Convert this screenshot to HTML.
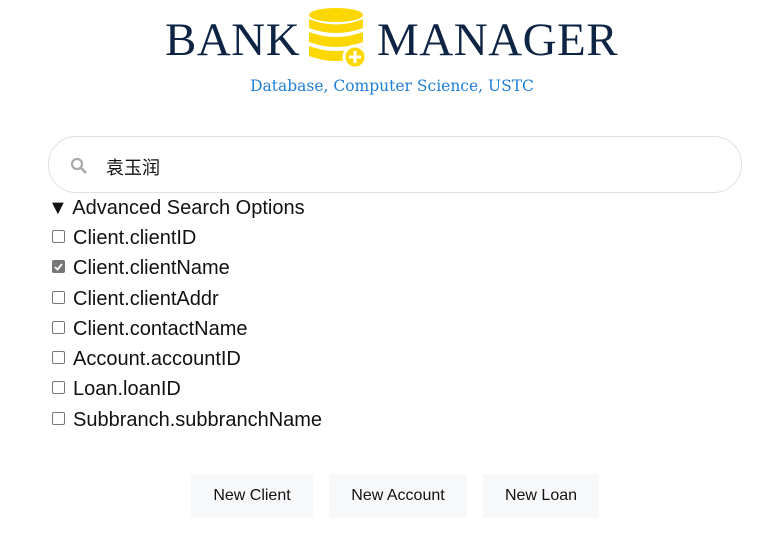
<!DOCTYPE html>
<html><head><meta charset="utf-8"><style>
body{margin:0;width:774px;height:552px;background:#fff;font-family:"Liberation Sans","Noto Sans CJK SC",sans-serif;position:relative;overflow:hidden}
.a{position:absolute}
.logo{font-family:"Liberation Serif","DejaVu Serif",serif;color:#0d2444;font-size:47px;top:15px;line-height:50px;letter-spacing:0.5px}
.sub{top:77px;left:0;width:784px;text-align:center;color:#1f7fd6;font-family:"DejaVu Serif",serif;font-size:15.5px}
.search{left:48px;top:136px;width:692px;height:55px;border:1px solid #e0e0e0;border-radius:28px}
.opt{left:52px;font-size:20px;color:#111;line-height:22px}
.opt i{display:inline-block;width:11px;height:11px;border:1px solid #767676;border-radius:2px;margin-right:8px;vertical-align:1px;position:relative}
.opt i.c{background:#777;border-color:#777}
.btn{top:474px;height:44px;line-height:44px;background:#f7f8fa;text-align:center;font-size:16px;color:#111}
</style></head><body>
<div class="a logo" style="left:165px">BANK</div>
<div class="a logo" style="left:377px">MANAGER</div>
<svg class="a" style="left:306px;top:6px" width="64" height="64" viewBox="0 0 64 64">
<ellipse cx="30" cy="9" rx="27" ry="7" fill="#fcd800"/>
<path d="M3 13 Q30 24 57 13 V22 Q30 32 3 22Z" fill="#fcd800"/>
<path d="M3 26 Q30 36 57 26 V36 Q30 46 3 36Z" fill="#fcd800"/>
<path d="M3 40 Q30 50 57 40 V50 Q30 60 3 50Z" fill="#fcd800"/>
<circle cx="49" cy="51" r="11" fill="#fcd800" stroke="#fff" stroke-width="3"/>
<path d="M49 45V57M43 51H55" stroke="#fff" stroke-width="3"/>
</svg>
<div class="a sub">Database, Computer Science, USTC</div>
<div class="a search"></div>
<svg class="a" style="left:70px;top:157px" width="18" height="18" viewBox="0 0 18 18"><circle cx="7" cy="7" r="5" fill="none" stroke="#aaa" stroke-width="2.2"/><path d="M11 11l5 5" stroke="#aaa" stroke-width="2.6"/></svg>
<div class="a" style="left:106px;top:154px;font-size:18px;color:#111">袁玉润</div>
<div class="a opt" style="left:48px;top:197px">▼ Advanced Search Options</div>
<div class="a opt" style="top:227px"><i></i>Client.clientID</div>
<div class="a opt" style="top:257px"><i class="c"><svg width="11" height="11" style="position:absolute;left:0;top:0"><path d="M2 6l2.5 2.5L9 3" stroke="#fff" stroke-width="1.8" fill="none"/></svg></i>Client.clientName</div>
<div class="a opt" style="top:288px"><i></i>Client.clientAddr</div>
<div class="a opt" style="top:318px"><i></i>Client.contactName</div>
<div class="a opt" style="top:348px"><i></i>Account.accountID</div>
<div class="a opt" style="top:378px"><i></i>Loan.loanID</div>
<div class="a opt" style="top:409px"><i></i>Subbranch.subbranchName</div>
<div class="a btn" style="left:191px;width:122px">New Client</div>
<div class="a btn" style="left:329px;width:138px">New Account</div>
<div class="a btn" style="left:483px;width:116px">New Loan</div>
</body></html>
